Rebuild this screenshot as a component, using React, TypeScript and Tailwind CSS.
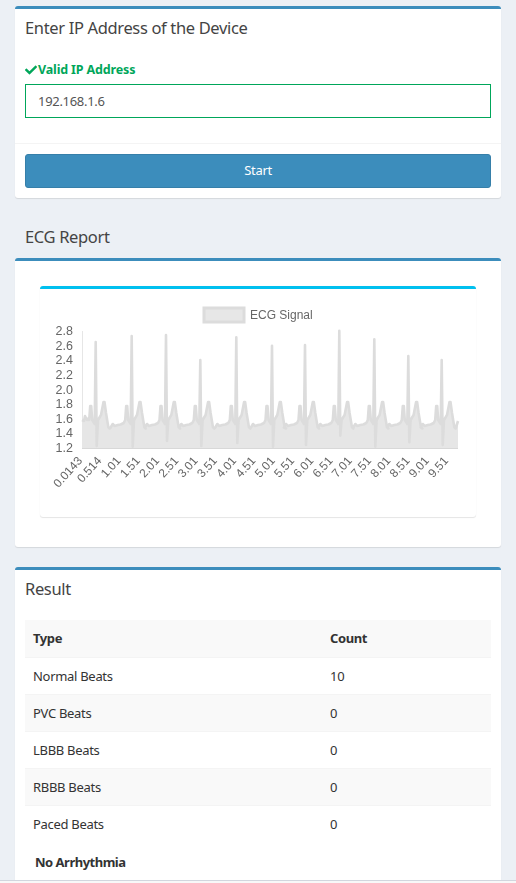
import type { ReactNode } from "react";
import { FaCheck } from "react-icons/fa";

const font = "font-['Noto_Sans','Open_Sans',sans-serif]";
const boxTitle = "text-[16.5px] leading-[20px] tracking-[-0.35px] text-[#444]";

// R peaks of the trace: [x, peak y, trough y], all in page pixels
const beats: [number, number, number][] = [
  [95.7, 342, 446],
  [131.7, 336, 446.7],
  [166, 335, 441],
  [200.3, 360, 446],
  [236.3, 337.3, 443],
  [272, 345.7, 446.7],
  [305, 345, 445],
  [339.3, 330.7, 435.7],
  [374.3, 339.3, 446.7],
  [408.3, 356, 442.3],
  [441.7, 360, 445],
];

function tracePoints() {
  const pts: [number, number][] = [
    [82, 420],
    [84, 421],
    [85, 416],
    [87, 420],
    [89, 418],
  ];
  beats.forEach(([x, peak, trough], i) => {
    if (i > 0) {
      pts.push([x - 21, 427.5], [x - 19, 424], [x - 17, 426], [x - 14, 425], [x - 11, 424.5], [x - 8, 423]);
    }
    pts.push(
      [x - 6.5, 420],
      [x - 5.5, 406],
      [x - 4.5, 406],
      [x - 3.5, 420],
      [x - 1, 424],
      [x, peak],
      [x + 1, trough],
      [x + 2.3, 420],
      [x + 5.3, 415],
      [x + 7.8, 402],
      [x + 8.8, 402],
      [x + 10.3, 413],
      [x + 12.6, 427],
      [x + 14, 428.5],
    );
  });
  pts.push([458, 421]);
  return pts.filter(([x]) => x <= 458);
}

const xLabels = [
  "0.0143", "0.514", "1.01", "1.51", "2.01", "2.51", "3.01", "3.51", "4.01", "4.51",
  "5.01", "5.51", "6.01", "6.51", "7.01", "7.51", "8.01", "8.51", "9.01", "9.51",
];
const yLabels = ["2.8", "2.6", "2.4", "2.2", "2.0", "1.8", "1.6", "1.4", "1.2"];

function EcgChart() {
  const line = tracePoints()
    .map(([x, y]) => `${x},${y}`)
    .join(" ");
  return (
    <svg
      viewBox="40 289 436 200"
      className="block h-[200px] w-[436px] overflow-visible tracking-normal blur-[0.4px]"
      fontFamily="'Liberation Sans', Arial, sans-serif"
      fontSize="12"
      fill="#666"
    >
      <rect x="204" y="308" width="40" height="14" fill="#e7e7e7" stroke="#dcdcdc" strokeWidth="3" />
      <text x="250" y="318.5">ECG Signal</text>
      {yLabels.map((t, i) => (
        <text key={t} x="73" y={335 + i * 14.63} textAnchor="end" fontSize="12.5">{t}</text>
      ))}
      <line x1="82.5" y1="331" x2="82.5" y2="448" stroke="#e6e6e6" />
      <polygon points={`82,448 ${line} 458,448`} fill="#e6e6e6" />
      <line x1="82" y1="448.5" x2="458" y2="448.5" stroke="#d8d8d8" />
      <polyline points={line} fill="none" stroke="#dcdcdc" strokeWidth="2.6" strokeLinejoin="round" />
      {xLabels.map((t, i) => {
        const x = 83 + i * 19.26;
        return (
          <text key={t} x={x} y={461} textAnchor="end" transform={`rotate(-48 ${x} 461)`}>{t}</text>
        );
      })}
    </svg>
  );
}

function Box({ children, className = "" }: { children: ReactNode; className?: string }) {
  return (
    <div className={`rounded-[3px] border-t-[3px] border-[#3c8dbc] bg-white shadow-[0_1px_1px_rgba(0,0,0,0.1)] ${className}`}>
      {children}
    </div>
  );
}

const rows = [
  ["Normal Beats", "10"],
  ["PVC Beats", "0"],
  ["LBBB Beats", "0"],
  ["RBBB Beats", "0"],
  ["Paced Beats", "0"],
];

export default function App() {
  return (
    <div className={`${font} flex h-[883px] flex-col overflow-hidden bg-[#ecf0f5] text-[13px] tracking-[-0.3px] text-[#333]`}>
      <main className="h-[880px] overflow-hidden px-[15px] pt-[6px]">
        <Box className="h-[192px]">
          <h3 className={`px-[10px] pt-[9px] ${boxTitle}`}>Enter IP Address of the Device</h3>
          <div className="px-[10px] pt-[23px]">
            <label className="flex h-[18px] items-center gap-[1px] text-[12.5px] font-bold tracking-[-0.15px] text-[#00a65a]">
              <FaCheck className="h-[12px] w-[12px]" />
              Valid IP Address
            </label>
            <input
              readOnly
              value="192.168.1.6"
              className="mt-[5px] block h-[34px] w-full border border-[#00a65a] px-3 text-[13px] text-[#555] outline-none"
            />
          </div>
          <div className="mt-[25px] border-t border-[#f4f4f4] p-[10px]">
            <button className="block h-[34px] w-full rounded-[3px] border border-[#367fa9] bg-[#3c8dbc] text-center text-[13px] text-white">
              Start
            </button>
          </div>
        </Box>

        <h3 className={`px-[10px] pt-[29px] pb-[11px] ${boxTitle}`}>ECG Report</h3>

        <Box className="h-[289px] px-[25px] pt-[25px]">
          <div className="h-[231px] rounded-[3px] border-t-[3px] border-[#00c0ef] bg-white shadow-[0_1px_1px_rgba(0,0,0,0.1),0_0_1px_rgba(0,0,0,0.05)]">
            <EcgChart />
          </div>
        </Box>

        <Box className="mt-[20px] h-[330px]">
          <h3 className={`px-[10px] pt-[9px] ${boxTitle}`}>Result</h3>
          <div className="px-[10px] pt-[21px]">
            <div className="grid h-[38px] grid-cols-[297px_1fr] items-center border-b border-[#f4f4f4] bg-[#f9f9f9] px-2 pt-px font-bold tracking-[-0.4px]">
              <span>Type</span>
              <span>Count</span>
            </div>
            {rows.map(([name, count], i) => (
              <div
                key={name}
                className={`grid h-[37px] grid-cols-[297px_1fr] items-center px-2 ${i % 2 ? "bg-[#f9f9f9]" : "bg-white"} ${i < 4 ? "border-b border-[#f4f4f4] pt-px" : ""}`}
              >
                <span>{name}</span>
                <span>{count}</span>
              </div>
            ))}
            <p className="pt-[10px] pl-[10px] leading-[18px] font-bold tracking-[-0.5px]">No Arrhythmia</p>
          </div>
        </Box>
      </main>
      <footer className="h-[3px] border-t border-[#d2d6de] bg-[#f8f8f8]" />
    </div>
  );
}
